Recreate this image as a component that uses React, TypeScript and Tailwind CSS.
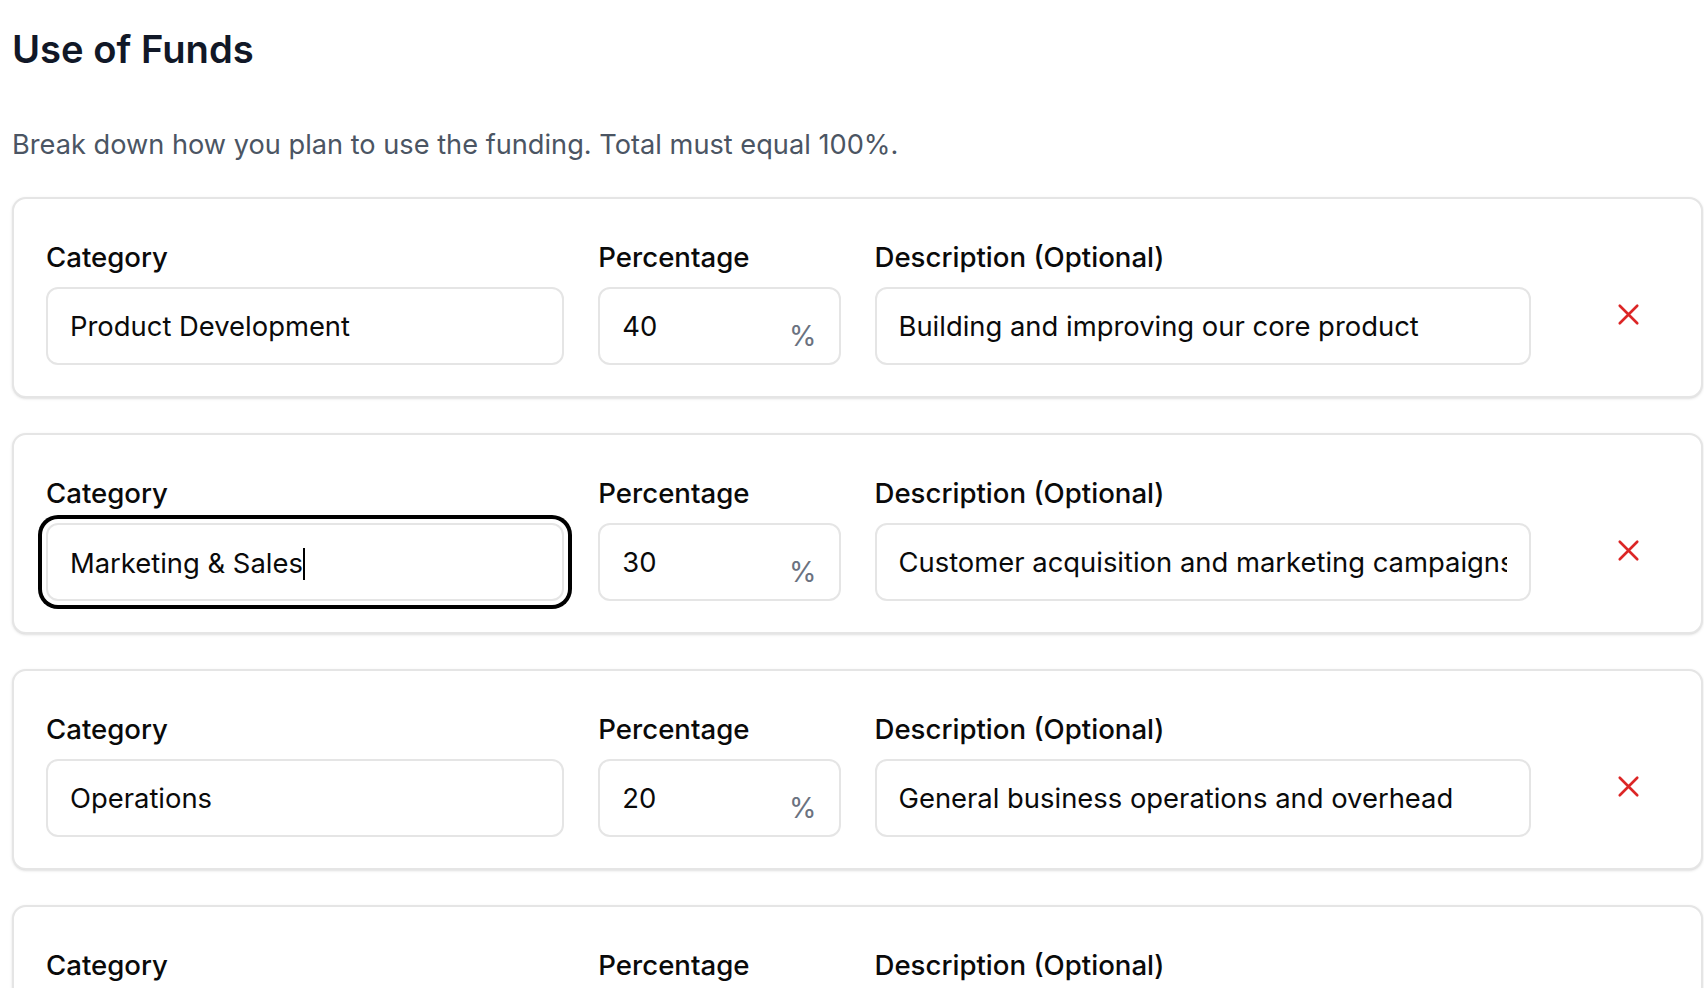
import React from "react";

type Row = { category: string; pct: string; desc: string; focused?: boolean };

const rows: Row[] = [
  { category: "Product Development", pct: "40", desc: "Building and improving our core product" },
  { category: "Marketing & Sales", pct: "30", desc: "Customer acquisition and marketing campaigns", focused: true },
  { category: "Operations", pct: "20", desc: "General business operations and overhead" },
  { category: "Reserve", pct: "10", desc: "Emergency fund and contingencies" },
];

function XMark() {
  return (
    <svg viewBox="0 0 24 24" fill="none" stroke="#dc2626" strokeWidth={1.8} className="h-[35px] w-[35px]">
      <path strokeLinecap="round" strokeLinejoin="round" d="M6 18 18 6M6 6l12 12" />
    </svg>
  );
}

const inputCls =
  "h-[78px] w-full rounded-[12px] border-2 border-[#e5e5e5] bg-white px-[22px] text-[27.4px] text-[#0a0a0a] outline-none";

const labelCls = "mb-[9px] text-[27.6px] leading-[42px] font-medium text-[#0a0a0a]";

function Card({ row }: { row: Row }) {
  return (
    <div className="rounded-[14px] border-2 border-[#e5e5e5] bg-white px-[32px] pt-[37px] pb-[31px] shadow-sm">
      <div className="grid grid-cols-12 gap-x-[34px]">
        <div className="col-span-4 flex flex-col">
          <label className={labelCls}>Category</label>
          {row.focused ? (
            <div className={inputCls + " flex items-center pt-[3px] ring-4 ring-black ring-offset-4 ring-offset-white"}>
              <span>{row.category}</span>
              <span className="inline-block h-[32px] w-[2px] bg-black" />
            </div>
          ) : (
            <input readOnly value={row.category} className={inputCls} />
          )}
        </div>
        <div className="col-span-2 flex flex-col">
          <label className={labelCls}>Percentage</label>
          <div className="relative">
            <input readOnly value={row.pct} className={inputCls + " pr-[60px]"} />
            <span className="pointer-events-none absolute right-[24px] top-[28px] text-[28px] leading-[42px] text-[#6b7280]">%</span>
          </div>
        </div>
        <div className="col-span-5 flex flex-col">
          <label className={labelCls}>Description (Optional)</label>
          <input readOnly value={row.desc} className={inputCls} />
        </div>
        <div className="col-span-1 flex flex-col justify-end">
          <button type="button" aria-label="Remove" className="mb-[33px] ml-[46px] h-[35px] w-[35px]">
            <XMark />
          </button>
        </div>
      </div>
    </div>
  );
}

export default function App() {
  return (
    <div className="min-h-screen bg-white pl-[12px] pr-[1px] pt-[22px] pb-[40px] font-['Inter',sans-serif]">
      <h1 className="text-[38.2px] leading-[54px] font-semibold text-[#111827]">Use of Funds</h1>
      <p className="mt-[48px] text-[27.2px] leading-[42px] text-[#4b5563]">
        Break down how you plan to use the funding. Total must equal 100%.
      </p>
      <div className="mt-[31px] flex flex-col gap-[35px]">
        {rows.map((r) => (
          <Card key={r.category} row={r} />
        ))}
      </div>
    </div>
  );
}
